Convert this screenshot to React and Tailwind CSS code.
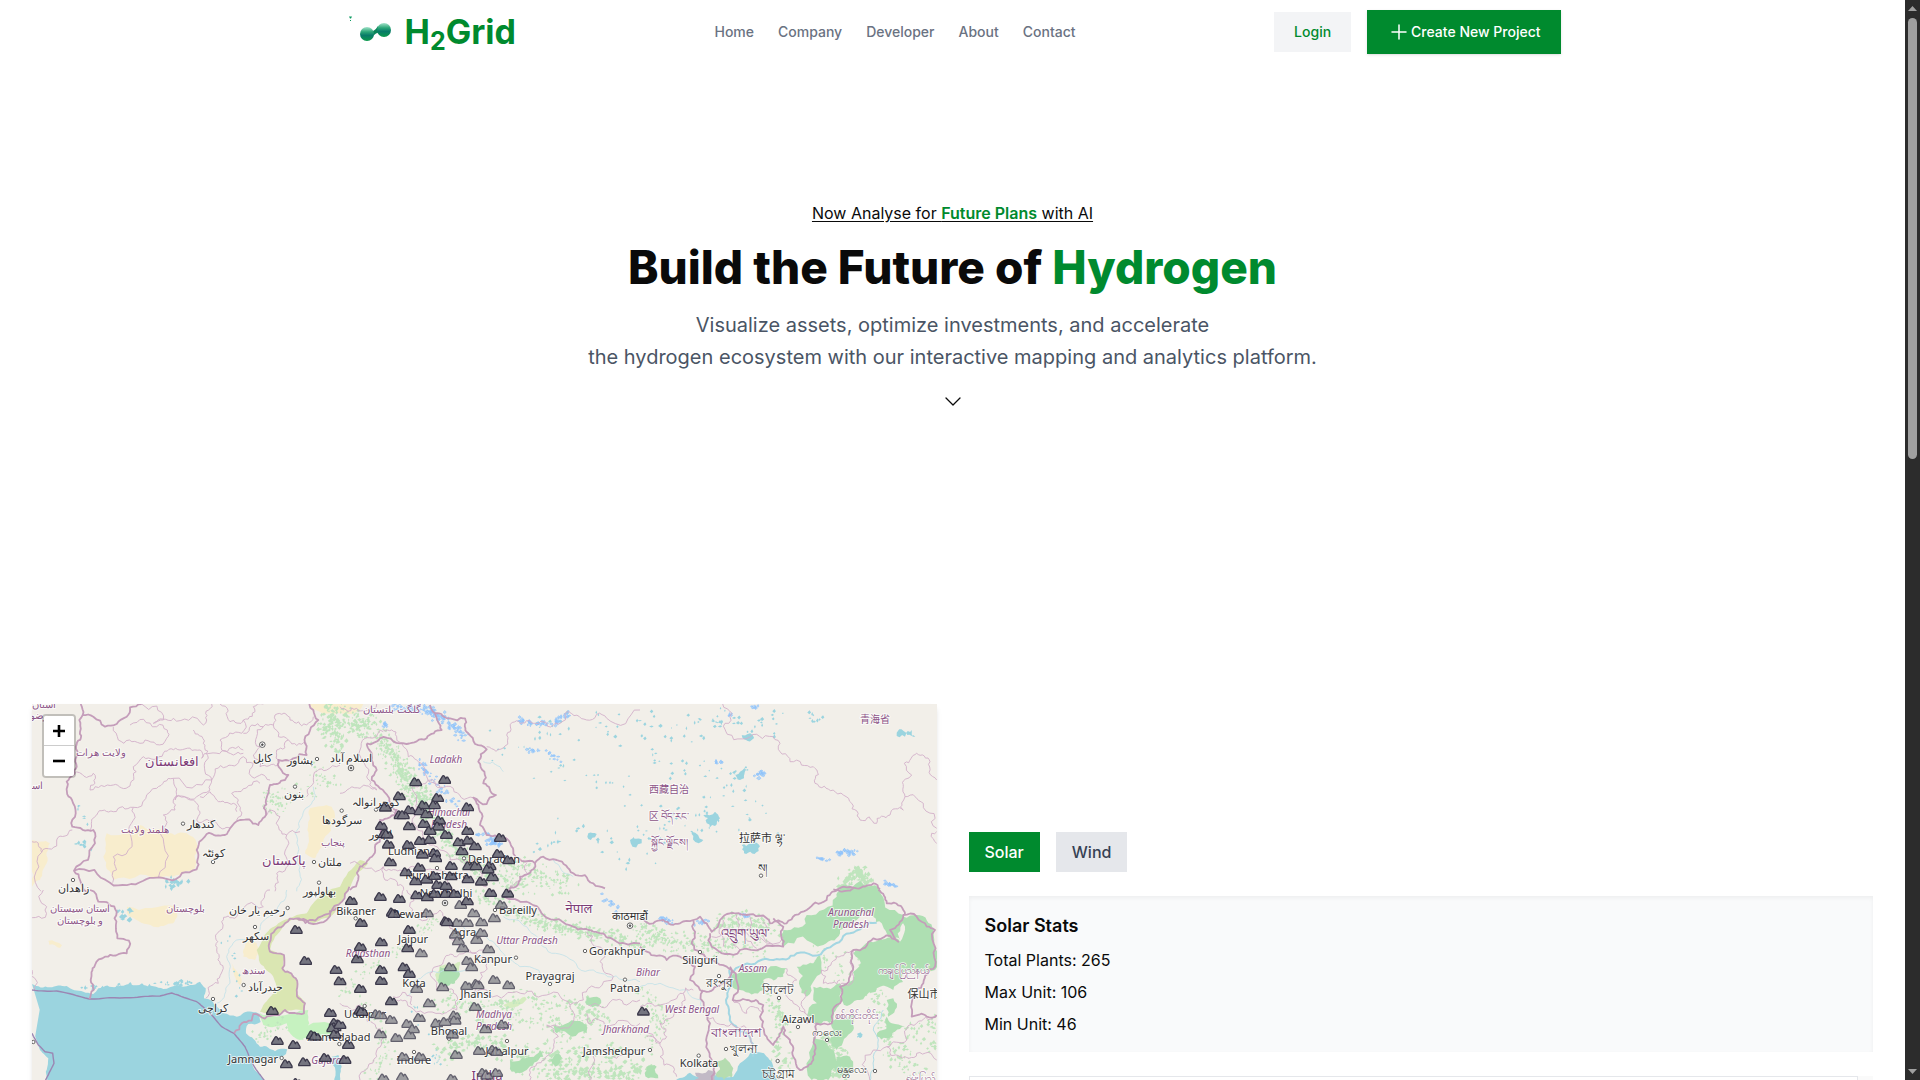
import React, { useMemo, useState } from "react";

/* ---------- map geometry ---------- */

// Origin of each survey sheet; sheet coordinates are three times finer than the map's.
const SHEET = { A: [30, 700], B: [340, 700], C: [640, 700], D: [30, 890], E: [340, 890], F: [640, 890] };

const toPoints = (sheet, text) =>
  text.trim().split(/\s+/).map((p) => {
    const [x, y] = p.split(",").map(Number);
    return [SHEET[sheet][0] + x / 3, SHEET[sheet][1] + y / 3];
  });

const generator = (seed) => {
  let s = seed;
  return () => {
    s = (s * 1664525 + 1013904223) % 4294967296;
    return s / 4294967296;
  };
};

// Midpoint displacement, so that borders and coasts look natural.
const roughen = (points, amount, random) => {
  let current = points;
  for (let pass = 0; pass < 3; pass += 1) {
    const next = [current[0]];
    for (let i = 1; i < current.length; i += 1) {
      const [ax, ay] = current[i - 1];
      const [bx, by] = current[i];
      const length = Math.hypot(bx - ax, by - ay);
      if (length > 4) {
        const shift = (random() - 0.5) * length * amount;
        next.push([(ax + bx) / 2 - ((by - ay) / length) * shift, (ay + by) / 2 + ((bx - ax) / length) * shift]);
      }
      next.push([bx, by]);
    }
    current = next;
  }
  return current;
};

const line = (sheet, text, amount = 0.35, close = false) => {
  const base = toPoints(sheet, text);
  const points = roughen(close ? [...base, base[0]] : base, amount, generator(text.length * 97 + 11));
  return "M" + points.map(([x, y]) => x.toFixed(1) + " " + y.toFixed(1)).join("L") + (close ? "Z" : "");
};

// Small scattered patches along a line of places.
const scatter = (sheet, text, radius, count, size, seed) => {
  const random = generator(seed);
  const places = toPoints(sheet, text);
  let d = "";
  for (let i = 0; i < count; i += 1) {
    const k = Math.floor(random() * Math.max(1, places.length - 1));
    const a = places[k];
    const b = places[Math.min(k + 1, places.length - 1)];
    const t = random();
    const angle = random() * Math.PI * 2;
    const r = radius * random();
    const x = a[0] + (b[0] - a[0]) * t + Math.cos(angle) * r;
    const y = a[1] + (b[1] - a[1]) * t + Math.sin(angle) * r;
    const w = size * (0.3 + random() * 0.8);
    const h = size * (0.3 + random() * 0.7);
    d += `M${x.toFixed(1)} ${y.toFixed(1)}l${w.toFixed(1)} ${(-h).toFixed(1)}l${(w * 0.7).toFixed(1)} ${h.toFixed(1)}l${(-w * 0.8).toFixed(1)} ${(h * 0.8).toFixed(1)}z`;
  }
  return d;
};

const DESERTS = [
  ["A", "230,400 330,375 400,392 470,400 500,430 495,505 380,535 250,540 220,470"],
  ["A", "840,325 905,320 915,350 880,430 855,475 825,460 832,390"],
  ["A", "6,420 60,430 50,490 30,540 6,560"],
  ["D", "290,50 440,50 430,100 370,110 300,80"],
  ["D", "650,150 680,160 675,210 640,200"],
  ["D", "605,220 635,270 630,285 612,255"],
  ["D", "55,152 96,166 90,174 58,164"],
  ["A", "825,0 905,5 1000,12 960,42 900,40"],
  ["D", "6,520 20,540 30,570 6,570"],
];

const GRASS = [
  ["D", "930,-10 870,15 830,70 800,75 745,100 700,140 680,180 690,220 730,260 740,300 700,345 690,365 740,375 790,360 820,362 825,335 800,310 798,265 760,240 762,195 720,180 735,140 790,85 850,100 900,80 940,25 965,-20 1015,-80 990,-90"],
];

const RANN = [["D", "690,370 740,380 835,360 838,400 820,450 790,440 770,400 700,405"], ["D", "770,420 900,400 905,440 810,450"]];

const FORESTS = [
  ["F", "430,120 500,75 590,20 600,-6 700,0 735,40 650,90 600,120 550,165 430,170"],
  ["F", "600,-10 720,-5 790,75 780,150 740,130 700,80 640,60"],
  ["F", "280,250 320,240 440,235 430,260 370,270 370,300 300,300 275,285"],
  ["F", "640,190 720,145 780,155 790,80 830,75 880,120 885,240 800,240 760,300 720,290 660,330 600,330 600,290 640,270"],
  ["F", "520,290 600,280 600,340 570,400 500,380"],
  ["F", "470,230 540,195 545,240 500,320 480,290"],
  ["F", "740,380 755,400 795,410 740,445 710,440"],
  ["F", "570,390 640,370 640,420 590,480 570,450"],
  ["F", "520,440 560,460 565,570 515,570"],
  ["F", "20,530 50,530 55,565 25,565"],
  ["F", "590,500 630,500 620,560 590,550"],
  ["F", "740,330 760,325 765,360 745,380"],
  ["E", "640,405 730,400 740,430 650,430"],
  ["E", "540,510 600,480 610,500 560,540 530,545"],
  ["E", "740,320 780,325 775,350 740,345"],
  ["E", "510,510 560,520 540,550 515,545"],
  ["E", "630,510 655,490 660,520 645,530"],
  ["E", "300,230 350,235 345,280 300,285"],
];

const LIGHT_GRASS = [["E", "490,345 555,320 560,328 500,352"], ["E", "300,225 360,215 350,270 300,285 285,255"]];

const SCATTERED_GREEN = [
  ["A", "880,20 920,60 870,90 930,110 900,140", 10, 130, 2.6, 3],
  ["A", "720,270 730,320 760,290 900,250 830,210", 11, 90, 2, 4],
  ["B", "0,30 30,70 60,90 90,40", 14, 110, 2.4, 5],
  ["B", "110,120 150,150 170,200 200,250 240,300 280,330", 13, 320, 2.2, 6],
  ["B", "170,200 260,330 310,420 380,480 450,530 570,560", 11, 320, 2.3, 7],
  ["B", "490,490 580,520 680,560", 14, 110, 2.2, 8],
  ["E", "400,10 500,60 600,100 700,120 800,140 900,165", 9, 300, 2.4, 9],
  ["F", "0,110 60,150 140,160 250,170 360,170", 12, 230, 2.2, 10],
  ["F", "230,110 300,100 380,120", 14, 130, 2.4, 11],
  ["C", "600,560 640,510 680,545", 8, 100, 3, 12],
  ["E", "0,320 80,240 150,190 230,130 280,90", 9, 90, 1.8, 13],
  ["E", "280,330 400,350 520,340 700,350 760,370", 15, 190, 2.3, 14],
  ["E", "300,480 440,450 560,510 700,480 900,530", 18, 260, 2.9, 15],
  ["E", "80,570 140,500 120,420 60,340", 9, 80, 2, 16],
  ["E", "400,400 600,390 700,420 780,380", 12, 120, 2.3, 17],
  ["E", "600,560 700,540 800,560 890,540", 12, 130, 3, 18],
  ["F", "380,340 430,380 400,470 440,540", 10, 90, 2.6, 19],
  ["F", "550,440 600,500 590,560", 12, 90, 3.4, 20],
  ["F", "700,300 720,400 770,500 830,550", 14, 100, 2.4, 21],
  ["F", "0,300 40,350 60,410 20,460", 14, 80, 2, 22],
  ["F", "540,200 620,240 700,190", 16, 50, 2.4, 23],
  ["F", "790,450 870,400 880,480", 14, 50, 2.4, 24],
  ["D", "670,440 700,430 760,400", 9, 35, 2, 25],
];

const SEA = [
  ["D", "6,282 60,292 110,288 160,305 190,312 205,295 260,290 340,285 400,297 480,285 510,275 527,295 522,325 545,332 580,370 620,380 665,365 690,372 692,396 655,402 648,430 690,470 735,484 772,478 768,492 735,505 700,510 665,520 690,555 706,574 760,900 400,900 6,900"],
  ["D", "905,500 925,495 935,530 928,590 908,590"],
  ["F", "80,620 100,574 150,548 170,560 230,555 280,560 300,520 330,490 372,490 400,530 412,574 420,640 250,680"],
];

const LAND = [["D", "-20,420 6,430 20,470 55,505 50,540 30,574 10,640 -20,640"]];

const MANGROVES = [["F", "230,515 255,503 280,535 275,562 230,560"]];
const CITIES = [["F", "165,548 205,540 228,550 222,580 165,580"]];

const LAKES_TEAL = [
  ["C", "190,345 225,335 240,355 225,378 200,370"],
  ["C", "305,435 355,432 355,445 312,460"],
  ["C", "770,98 790,92 795,110"],
  ["C", "802,105 815,90 826,110"],
  ["B", "870,420 905,418 905,430 872,430"],
  ["B", "745,400 770,402 765,412 742,410"],
  ["C", "275,225 300,215 318,208 312,235 290,232"],
  ["C", "155,395 190,420 185,425 160,408"],
  ["C", "222,65 240,60 245,78"],
  ["C", "305,105 338,105 335,120 312,118"],
];

const SCATTERED_TEAL = [
  ["B", "560,90 700,60 820,90 900,60", 20, 36, 2.4, 31],
  ["B", "430,150 560,180 720,210 890,280", 25, 30, 2, 32],
  ["B", "600,440 720,380 800,430 900,450", 24, 26, 2.6, 33],
  ["C", "20,40 120,90 230,60 330,80 440,60", 16, 44, 2.5, 34],
  ["C", "0,170 120,200 240,270 300,220", 26, 40, 2.2, 35],
  ["C", "30,440 100,340 200,340 400,350", 24, 48, 2.2, 36],
  ["C", "480,20 540,60 430,50", 7, 10, 2.4, 37],
  ["A", "120,290 170,380 140,430 180,450", 4, 16, 2.6, 38],
  ["A", "400,545 460,550 390,560", 5, 20, 3, 39],
  ["D", "260,60 300,66 265,80 290,90", 3, 14, 3.2, 40],
  ["D", "580,130 600,200 625,320", 7, 12, 1.8, 41],
  ["D", "150,296 350,284 490,276", 3, 40, 2.6, 42],
  ["E", "280,520 290,500 210,330", 6, 22, 1.8, 43],
  ["F", "650,430 655,440", 4, 8, 2.4, 44],
];

const SCATTERED_BLUE = [
  ["B", "160,20 260,30 310,60 370,110", 7, 110, 2.1, 51],
  ["B", "230,190 260,220 300,270 340,310", 6, 46, 2, 52],
  ["B", "530,60 580,70 640,70 680,40", 4, 60, 2, 53],
  ["B", "440,420 480,435", 5, 30, 2.2, 54],
  ["B", "620,150 660,190", 3, 12, 1.8, 55],
  ["B", "560,150 590,152", 3, 10, 2, 56],
  ["C", "345,225 370,215", 4, 14, 2.4, 57],
  ["C", "225,185 240,187", 3, 8, 2.2, 58],
  ["C", "585,458 640,455", 4, 26, 2.2, 59],
  ["C", "530,475 570,480", 2, 12, 1.8, 67],
  ["C", "725,545 765,562", 2, 16, 2, 60],
  ["F", "50,85 90,95", 3, 14, 2.2, 61],
  ["F", "155,105 200,90", 3, 10, 2.2, 68],
  ["F", "290,72 320,80", 2, 8, 2.2, 69],
  ["E", "780,20 830,50", 7, 10, 2.4, 62],
  ["C", "330,25 345,20", 2, 8, 2, 63],
  ["C", "260,50 270,42", 2, 5, 2, 70],
  ["B", "130,70 135,80", 3, 9, 2, 64],
  ["B", "400,405 440,402", 2, 8, 2, 65],
];

const NATIONAL = [
  ["A", "152,12 158,45 190,50 225,80 260,72 290,50 300,22 335,12"],
  ["A", "158,45 148,60 150,95 138,140 140,200 133,222 110,245 126,300 127,380 190,390 195,430 132,512 240,548 340,542 380,533 415,538 500,508 500,450 515,420 530,402 585,405 600,385 630,360 658,358 685,375 705,350 708,300 720,255 765,240 775,225 750,205 745,180 790,175 830,165 825,130 865,60 850,30 838,12"],
  ["A", "132,512 150,540 170,575"],
  ["D", "180,0 205,35 260,65 262,145 297,152 290,190 225,200 195,225 182,270 178,327"],
  ["B", "80,130 120,115 200,132 260,115 305,90 285,40 330,55 375,55 385,100 440,148 415,185 430,250 468,285 440,312 400,293 425,340 420,375 440,405 490,415 520,450 585,490 610,470 650,480 700,520 760,550 795,565"],
  ["B", "80,130 95,180 110,210 95,240 145,290 170,330 120,360 125,410 100,465 60,500 30,570"],
  ["B", "270,15 285,40"],
  ["E", "28,-10 -30,70 -75,92 -130,85"],
  ["D", "800,85 850,102 890,90 925,50"],
  ["D", "800,85 765,100 722,150 720,185 762,195 757,235 797,265 800,300 825,340 822,370 765,360 740,375 670,372 665,392 635,400 612,430"],
  ["E", "490,20 560,35 610,75 700,110 760,125 790,130 830,155 900,160"],
  ["E", "585,-80 540,-40 500,5"],
  ["F", "0,85 40,100 70,90 120,100 160,90 180,80 200,100 215,125 240,90 270,70 320,75 390,100 440,100 500,60 560,30 595,0 640,-5"],
  ["F", "160,90 155,160 180,190 260,230 275,240 260,280 230,290 180,300 150,270 165,230 120,200 80,210 20,185 0,170"],
  ["F", "210,130 215,170 300,180 430,170 430,110 400,85"],
  ["F", "190,300 210,400 200,440 215,520 215,574"],
  ["F", "270,230 278,330 320,330 370,345 360,380 380,440 400,465 430,410 450,450 460,500 480,540 520,510 525,440 530,400 575,400 605,330 600,290 640,230 640,180 700,145 775,155 750,120 790,75 830,80 860,110 885,120 885,230 850,280 830,300 815,340 815,380 860,380 890,375"],
  ["C", "580,568 610,560 650,565 700,550 720,568"],
  ["F", "715,0 740,40 790,60 795,75"],
];

const MARITIME = [
  ["D", "6,300 80,303 178,327 300,323 390,318 425,309 500,335 540,370 575,410 612,430 645,470 670,525 705,574"],
  ["D", "6,430 25,465 45,485 68,490 72,520 45,574"],
];

const PROVINCIAL = [
  ["A", "250,80 265,120 330,130 345,120 410,115 412,90 380,80 300,75"],
  ["A", "133,222 190,220 195,250 180,270 250,255 300,258 310,200 340,170 400,160 450,150 510,150 515,175 540,160 610,165 640,160"],
  ["A", "335,12 400,60 370,70 430,55 520,75 530,60 545,12"],
  ["A", "490,90 520,130 530,180 545,240"],
  ["A", "570,12 600,65 640,60 635,100 570,120 575,150 640,150"],
  ["A", "640,60 670,20 700,12"],
  ["A", "640,100 700,80 730,75 735,45 780,60 830,75 850,50"],
  ["A", "700,80 680,110 690,140 670,165 690,200 745,195"],
  ["A", "730,75 745,110 775,120 830,130"],
  ["A", "775,120 740,150 745,180"],
  ["A", "545,240 590,200 640,170 670,190 665,230 720,240"],
  ["A", "620,360 625,300 605,280 670,245 690,250"],
  ["A", "545,240 540,270 500,290 430,300 435,330 400,345 390,400 385,533"],
  ["A", "180,390 200,345 250,335 310,322 380,265 430,235 545,240"],
  ["A", "310,322 300,400 250,470 248,548"],
  ["A", "430,235 435,300 490,300 510,340 500,360 560,370 600,385"],
  ["A", "510,290 540,275 560,300 610,310 620,335"],
  ["A", "705,350 735,335 750,350 748,390 770,405 810,395"],
  ["A", "770,405 768,470 740,520 735,574"],
  ["A", "6,425 35,457 80,420 127,390"],
  ["A", "35,457 33,574"],
  ["D", "0,90 35,85 50,50 35,40 40,0"],
  ["D", "720,0 700,50 620,80 575,95 562,130 560,180 580,235 565,280 527,325"],
  ["D", "6,240 18,270 15,300"],
  ["A", "830,290 850,240 890,210 930,195"],
  ["B", "0,20 50,25 110,12"],
  ["B", "0,280 60,265 110,270 80,230 60,150 75,115 120,90 130,95"],
  ["B", "185,130 205,170 230,180 260,230 300,262 340,265 400,293"],
  ["B", "130,90 170,110 200,132"],
  ["B", "440,140 495,138 500,105 530,62 580,70 640,75 680,35 740,60 800,55 900,30"],
  ["B", "220,330 230,290 215,262 260,245 300,262"],
  ["B", "140,330 200,345 220,330 225,375 260,420 300,450 330,480 370,490"],
  ["B", "130,500 180,510 240,500 290,510 340,570"],
  ["B", "30,490 130,500 135,540 190,560 185,590"],
  ["B", "370,480 420,500 440,560"],
  ["B", "560,490 540,540 510,570"],
  ["C", "248,12 275,40 255,70 262,103 350,103 420,130 450,185 520,200 525,250 580,270 635,310 660,360 710,370 750,345 790,330 795,290 850,310 890,385"],
  ["C", "795,290 790,260 815,225 793,190 830,160 870,185 890,240"],
  ["C", "890,395 875,400 890,430"],
  ["E", "200,0 215,70 300,60 330,100 335,150 400,190 430,200"],
  ["E", "430,200 420,270 400,310 440,300 530,305 620,315 690,345 730,330 745,295 820,260 780,215 790,180 740,125"],
  ["E", "270,250 310,215 350,200 430,180"],
  ["E", "270,250 290,300 340,300 350,360 300,370 210,350 170,330"],
  ["E", "0,340 60,345 100,400 130,440 110,500 60,570"],
  ["E", "160,320 215,320 215,345"],
  ["E", "690,345 700,395 620,405 655,440 630,490 590,520 570,570"],
  ["E", "745,345 800,350 860,345 900,330"],
  ["E", "740,370 745,400 800,410 900,400"],
  ["E", "750,574 760,500 830,505 900,480"],
  ["F", "0,350 60,345 120,310 160,300"],
  ["F", "130,310 125,350 100,380 60,400 80,440 60,460 20,440"],
  ["F", "278,330 320,370 340,350 365,365"],
  ["F", "275,400 330,440 350,480"],
  ["F", "200,380 230,400 275,400"],
  ["F", "440,235 470,270 430,300 450,330 460,340"],
  ["F", "545,240 550,280 600,270"],
  ["F", "545,240 590,200 640,185 640,270 600,285"],
  ["F", "460,340 495,370 500,400 530,400"],
  ["F", "500,300 495,370"],
  ["F", "250,90 250,170"],
  ["F", "290,75 280,130 300,180"],
  ["F", "330,80 320,120 350,175"],
  ["F", "370,95 375,130 400,165"],
  ["F", "215,140 300,130 430,140"],
  ["F", "740,470 800,450 830,400 890,380"],
  ["F", "690,574 700,480 740,470 780,500 830,490 890,510"],
  ["F", "0,410 40,440 60,500 100,530 110,560"],
];

const RIVERS = [
  ["A", "850,260 845,310 810,360 805,440 810,500 800,574"],
  ["D", "770,0 740,60 690,120 620,150 590,200 600,280 560,340"],
  ["E", "490,80 560,110 600,160 680,200 760,240 850,270 900,275"],
  ["E", "370,110 430,130 480,180 540,230 640,280"],
  ["F", "0,290 60,280 140,300 200,380"],
  ["E", "200,320 260,250 400,220"],
  ["B", "640,480 700,530"],
  ["B", "430,185 480,200 490,215"],
];

const BIG_RIVERS = [
  ["F", "270,250 310,225 400,210 470,190 560,175 630,130 710,98"],
  ["F", "268,240 265,300 270,380 275,400 320,430 340,500"],
];

const SMALL_RIVERS = [["F", "730,360 700,420 700,500 690,574"]];

const TINTS = { town: "#333333", region: "#8d5487", country: "#7d3c77" };

// [text, x, baseline, size, kind, italic]
const LABELS = [
  ["افغانستان", 172, 766, 13, "country"],
  ["ولایت هرات", 101, 756, 10, "region"],
  ["هلمند ولایت", 145, 833, 10, "region"],
  ["کندهار", 201, 828, 11, "town"],
  ["كابل", 262, 762, 11, "town"],
  ["پشاور", 300, 764, 11, "town"],
  ["بنون", 294, 798, 11, "town"],
  ["کوئٹہ", 213, 857, 11, "town"],
  ["پاکستان", 284, 865, 13, "country"],
  ["ملتان", 330, 866, 11, "town"],
  ["زاهدان", 73, 892, 11, "town"],
  ["استان", 44, 708, 10, "region"],
  ["رضوی", 35, 719, 10, "region"],
  ["اسـ", 36, 789, 10, "region"],
  ["بهاولپور", 319, 895, 11, "town"],
  ["گلگت بلتستان", 392, 713, 10, "region"],
  ["اسلام آباد", 351, 762, 11, "town"],
  ["گوجرانوالہ", 376, 806, 11, "town"],
  ["سرگودها", 342, 824, 11, "town"],
  ["پنجاب", 333, 846, 10, "region"],
  ["لاہور", 380, 838, 11, "town"],
  ["Ladakh", 446, 763, 10, "region", true],
  ["Himachal", 449, 816, 10, "region", true],
  ["Pradesh", 449, 828, 10, "region", true],
  ["Ludhiana", 412, 855, 11, "town"],
  ["Dehradun", 494, 863, 11, "town"],
  ["Kurukshetra", 437, 879, 11, "town"],
  ["New Delhi", 446, 897, 11, "town"],
  ["西藏自治", 669, 793, 10, "region"],
  ["区 བོད་རང་", 669, 820, 10, "region"],
  ["སྐྱོང་ལྗོངས།", 669, 846, 10, "region"],
  ["拉萨市 ལྷ་", 762, 842, 11, "town"],
  ["ས།", 762, 872, 11, "town"],
  ["青海省", 875, 723, 10, "region"],
  ["استان سيستان", 80, 912, 10, "region"],
  ["و بلوچستان", 80, 924, 10, "region"],
  ["بلوچستان", 185, 912, 10, "region"],
  ["رحیم یار خان", 257, 914, 11, "town"],
  ["سکهر", 256, 940, 11, "town"],
  ["سندھ", 253, 974, 10, "region"],
  ["حيدرآباد", 265, 991, 11, "town"],
  ["کراچی", 213, 1012, 11, "town"],
  ["Jamnagar", 253, 1063, 11, "town"],
  ["Gujarat", 328, 1064, 10, "region", true],
  ["Ahmedabad", 339, 1041, 11, "town"],
  ["Bikaner", 356, 915, 11, "town"],
  ["Rewari", 410, 918, 11, "town"],
  ["Jaipur", 413, 943, 11, "town"],
  ["Agra", 464, 936, 11, "town"],
  ["Bareilly", 518, 914, 11, "town"],
  ["Uttar Pradesh", 527, 944, 10, "region", true],
  ["Kanpur", 493, 963, 11, "town"],
  ["Rajasthan", 368, 957, 10, "region", true],
  ["Kota", 414, 987, 11, "town"],
  ["Jhansi", 476, 998, 11, "town"],
  ["Prayagraj", 550, 980, 11, "town"],
  ["Gorakhpur", 617, 955, 11, "town"],
  ["Patna", 625, 992, 11, "town"],
  ["Bihar", 648, 976, 10, "region", true],
  ["नेपाल", 579, 913, 13, "country"],
  ["काठमाडौं", 630, 920, 11, "town"],
  ["Udaipur", 365, 1018, 11, "town"],
  ["Bhopal", 449, 1035, 11, "town"],
  ["Madhya", 494, 1018, 10, "region", true],
  ["Pradesh", 494, 1030, 10, "region", true],
  ["Indore", 414, 1064, 11, "town"],
  ["Jabalpur", 507, 1055, 11, "town"],
  ["Jharkhand", 626, 1033, 10, "region", true],
  ["Jamshedpur", 614, 1055, 11, "town"],
  ["India", 487, 1080, 13, "country"],
  ["འབྲུག་ཡུལ་", 745, 938, 13, "country"],
  ["Siliguri", 700, 964, 11, "town"],
  ["Assam", 753, 972, 10, "region", true],
  ["রংপুর", 719, 987, 12, "town"],
  ["সিলেট", 778, 994, 12, "town"],
  ["Aizawl", 798, 1023, 11, "town"],
  ["West Bengal", 692, 1013, 10, "region", true],
  ["বাংলাদেশ", 736, 1037, 13, "country"],
  ["খুলনা", 743, 1053, 12, "town"],
  ["Kolkata", 699, 1067, 11, "town"],
  ["চট্টগ্রাম", 778, 1078, 12, "town"],
  ["ကလေး", 827, 1036, 11, "town"],
  ["မန္တလေး", 852, 1073, 11, "town"],
  ["စစ်ကိုင်းတိုင်း", 857, 1019, 10, "region"],
  ["ကချင်ပြည်နယ်", 903, 974, 10, "region"],
  ["保山市", 924, 998, 11, "town"],
  ["ရှမ်းပြည်", 920, 1082, 10, "region"],
  ["Arunachal", 851, 916, 10, "region", true],
  ["Pradesh", 851, 928, 10, "region", true],
];

const TOWN_DOTS = [
  ["A", "459,371 861,177 795,260 549,486 852,486 129,540 867,548"],
  ["B", "108,329 5,332 372,475 291,504"],
  ["C", "363,527"],
  ["D", "773,54 675,111 641,285 549,327 755,504 928,462 10,456"],
  ["E", "47,85 465,60 528,203 630,282 735,183 855,269 74,348 327,446 222,486 501,453"],
  ["F", "30,480 180,186 237,258 417,324 474,411 258,477 176,497 413,513 561,450 705,543"],
];

const CAPITAL_DOTS = [["A", "697,134"], ["B", "33,204"], ["E", "315,39 870,107"]];

const SOLAR = [
  ["B", "227,245 314,238 178,287 136,321 293,292 283,314 250,314 209,329 240,332 180,344 190,344 260,341 383,320 124,376 208,377 252,370 298,360 295,378 270,391 319,403 383,391 481,412 133,401 141,402 145,432 205,433 241,421 270,418 357,425 385,420 406,437 366,452 247,462 284,457 287,473 475,460 506,479 151,485 238,501 198,515 334,496 386,497 408,497 450,497 444,507 457,530 227,542 260,537 284,526 333,527 384,536 424,543 293,553 318,556"],
  ["D", "799,118 827,211 918,238 930,272 727,361 901,367 915,397 915,410 908,413 915,432 847,434 856,438 742,451 793,463 769,521 823,515 886,502 800,577"],
  ["E", "34,31 121,19 178,25 230,14 262,20 157,66 162,70 64,97 208,118 124,155 61,169 203,173 52,206 124,238 192,230 208,250 124,271 61,295 154,332 60,360 66,364 25,463 15,508 0,403 318,92 322,95 452,7 503,9 382,32 285,10 318,10 345,10"],
  ["F", "10,363"],
];

const SOLAR_FAINT = [
  ["E", "362,43 484,43 262,68 401,68 463,83 353,97 382,97 425,95 425,127 346,132 355,152 410,148 368,173 446,176 244,188 383,211 395,230 331,230 463,268 506,284 380,286 410,280 414,284 308,290 230,295 268,338 406,349 110,371 122,374 154,388 238,382 344,375 345,390 203,400 220,416 290,398 315,394 121,431 170,442 209,434 337,432 437,416 488,402 349,493 418,481 460,478 470,484 190,499 241,499 430,547 470,547 440,555 130,564 187,560 336,565"],
];

const Shapes = ({ items, fill, amount = 0.3 }) => (
  <path d={items.map(([s, t]) => line(s, t, amount, true)).join("")} fill={fill} />
);

const Strokes = ({ items, color, width, amount = 0.35 }) => (
  <path d={items.map(([s, t]) => line(s, t, amount)).join("")} fill="none" stroke={color} strokeWidth={width} strokeLinejoin="round" />
);

const Scattered = ({ items, fill, stroke }) => (
  <path d={items.map((args) => scatter(...args)).join("")} fill={fill} stroke={stroke} strokeWidth={stroke ? 0.6 : 0} />
);

const Markers = ({ items, fill, stroke, opacity }) => (
  <g fill={fill} stroke={stroke} strokeWidth="1.3" strokeLinejoin="round" opacity={opacity}>
    {items.flatMap(([s, t]) =>
      toPoints(s, t).map(([x, y], i) => (
        <path key={s + i} transform={`translate(${x} ${y})`} d="M-5.6 4V2.6L-2.3-3Q-1.4-4.6-.2-3L1-.6 2-2.2 3-2.2 5.7 2.4V4Z" />
      ))
    )}
  </g>
);

function IndiaMap() {
  return (
    <svg viewBox="32 704 905 596" preserveAspectRatio="xMinYMin slice" className="h-full w-full" role="img" aria-label="Map of solar plants in India">
      <rect x="32" y="704" width="905" height="596" fill="#f2efe9" />
      <Shapes items={DESERTS} fill="#f8edcd" />
      <Shapes items={RANN} fill="#c6f2c0" />
      <Shapes items={GRASS} fill="#dae6b2" amount={0.15} />
      <Shapes items={LIGHT_GRASS} fill="#d5ecc0" />
      <Scattered items={SCATTERED_GREEN} fill="#bfe5bd" />
      <Shapes items={FORESTS} fill="#aedfb2" amount={0.5} />
      <Shapes items={SEA} fill="#9bd4df" amount={0.25} />
      <Shapes items={LAND} fill="#f2efe9" amount={0.1} />
      <Shapes items={MANGROVES} fill="#b5dcb0" amount={0.5} />
      <Shapes items={CITIES} fill="#c2bac6" amount={0.8} />
      <Shapes items={LAKES_TEAL} fill="#9bd4df" amount={0.8} />
      <Scattered items={SCATTERED_TEAL} fill="#9bd4df" />
      <Scattered items={SCATTERED_BLUE} fill="#b5d6f3" stroke="#8fc2fb" />
      <Strokes items={RIVERS} color="#c0e1e8" width={0.8} />
      <Strokes items={SMALL_RIVERS} color="#b4dde6" width={1} />
      <Strokes items={BIG_RIVERS} color="#a3d6e2" width={2} />
      <Strokes items={PROVINCIAL} color="#d3b0ca" width={0.9} amount={0.6} />
      <Strokes items={MARITIME} color="#9b86b3" width={1.4} amount={0.04} />
      <Strokes items={NATIONAL} color="#c49dba" width={1.8} amount={0.4} />
      <g fill="#ffffff" stroke="#555555" strokeWidth="0.9">
        {TOWN_DOTS.flatMap(([s, t]) => toPoints(s, t).map(([x, y], i) => <circle key={s + i} cx={x} cy={y} r="1.7" />))}
        {CAPITAL_DOTS.flatMap(([s, t]) =>
          toPoints(s, t).map(([x, y], i) => (
            <g key={s + i}>
              <circle cx={x} cy={y} r="2.8" />
              <circle cx={x} cy={y} r="0.9" fill="#555555" />
            </g>
          ))
        )}
      </g>
      <g textAnchor="middle" stroke="#ffffff" strokeOpacity="0.7" strokeWidth="2" strokeLinejoin="round" fontFamily="'Noto Sans', 'Noto Sans CJK SC', sans-serif" style={{ paintOrder: "stroke" }}>
        {LABELS.map(([text, x, y, size, kind, italic], i) => (
          <text key={i} x={x} y={y} fontSize={size} fill={TINTS[kind]} fontStyle={italic ? "italic" : "normal"}>
            {text}
          </text>
        ))}
      </g>
      <Markers items={SOLAR_FAINT} fill="#8f8f94" stroke="#4a4858" opacity={0.85} />
      <Markers items={SOLAR} fill="#6a6a76" stroke="#2b283c" opacity={0.92} />
    </svg>
  );
}

/* ---------- page ---------- */

function Logo() {
  return (
    <a href="#home" className="flex items-center gap-3 text-[#008a2e]">
      <svg viewBox="0 0 48 40" className="h-10 w-12" aria-hidden="true">
        <defs>
          <linearGradient id="ball" x1="0" y1="0" x2="0" y2="1">
            <stop offset="0" stopColor="#a5e3cb" />
            <stop offset="0.35" stopColor="#2aa677" />
            <stop offset="0.6" stopColor="#087a68" />
            <stop offset="1" stopColor="#0b9a4b" />
          </linearGradient>
        </defs>
        <path d="M22 20Q29 21 33 14L36 20Q31 20 26 26Z" fill="#0a8558" />
        <circle cx="22" cy="22" r="7" fill="url(#ball)" />
        <circle cx="39" cy="18" r="7" fill="url(#ball)" />
        <path d="M4 4.500h3l-1 2H5zM5 8h1v1H5z" fill="#0a9a60" />
      </svg>
      <span className="text-[34px] leading-10 font-bold">
        H<sub className="text-[25px]">2</sub>Grid
      </span>
    </a>
  );
}

function Header() {
  return (
    <header className="mx-auto flex h-16 w-full max-w-7xl items-center justify-between px-8">
      <Logo />
      <nav className="flex gap-6 text-sm font-medium text-[#6a7282]">
        <a href="#home">Home</a>
        <a href="#company">Company</a>
        <a href="#developer">Developer</a>
        <a href="#about">About</a>
        <a href="#contact">Contact</a>
      </nav>
      <div className="flex items-center gap-4 text-sm font-medium">
        <button type="button" className="h-10 bg-gray-100 px-5 text-[#008a2e]">Login</button>
        <button type="button" className="flex h-11 items-center bg-[#008a2e] px-5 text-white shadow-sm">
          <svg viewBox="0 0 24 24" className="h-6 w-6" fill="none" stroke="currentColor" strokeWidth="1.5" strokeLinecap="round" aria-hidden="true">
            <path d="M12 5v14M5 12h14" />
          </svg>
          Create New Project
        </button>
      </div>
    </header>
  );
}

function Hero() {
  return (
    <section className="flex h-[640px] flex-col items-center pt-[137px] text-center">
      <p className="leading-6 underline underline-offset-2">
        Now Analyse for <span className="font-semibold text-[#008a2e]">Future Plans</span> with AI
      </p>
      <h1 className="mt-3.5 text-[46px] leading-[56px] font-extrabold">
        Build the Future of <span className="text-[#008a2e]">Hydrogen</span>
      </h1>
      <p className="mt-3.5 text-xl leading-8 text-[#4a5565]">
        Visualize assets, optimize investments, and accelerate
        <br />
        the hydrogen ecosystem with our interactive mapping and analytics platform.
      </p>
      <button type="button" aria-label="Scroll down" className="mt-4">
        <svg viewBox="0 0 24 24" className="h-6 w-6" fill="none" stroke="currentColor" strokeWidth="1.3" strokeLinecap="round" strokeLinejoin="round" aria-hidden="true">
          <path d="M5 9l7 7L19 9" />
        </svg>
      </button>
    </section>
  );
}

const STATS = {
  Solar: [["Total Plants", 265], ["Max Unit", 106], ["Min Unit", 46]],
  Wind: [["Total Plants", 265], ["Max Unit", 106], ["Min Unit", 46]],
};

function Explorer() {
  const [source, setSource] = useState("Solar");
  const map = useMemo(() => <IndiaMap />, []);
  return (
    <section className="grid grid-cols-2 gap-8 px-8">
      <div className="relative h-[596px] overflow-hidden shadow-md">
        {map}
        <div className="absolute top-[10px] left-[10px] flex flex-col rounded border-2 border-black/20 bg-clip-padding text-black">
          <button type="button" aria-label="Zoom in" className="flex h-[30px] w-[30px] items-center justify-center rounded-t-xs border-b border-[#cccccc] bg-white">
            <svg viewBox="0 0 12 12" className="h-3 w-3" stroke="currentColor" strokeWidth="2.6" aria-hidden="true"><path d="M6 0v12M0 6h12" /></svg>
          </button>
          <button type="button" aria-label="Zoom out" className="flex h-[30px] w-[30px] items-center justify-center rounded-b-xs bg-white">
            <svg viewBox="0 0 12 12" className="h-3 w-3" stroke="currentColor" strokeWidth="2.6" aria-hidden="true"><path d="M0 6h12" /></svg>
          </button>
        </div>
      </div>
      <div className="flex flex-col gap-6 pt-32">
        <div className="flex gap-4 font-medium">
          {["Solar", "Wind"].map((name) => (
            <button
              key={name}
              type="button"
              onClick={() => setSource(name)}
              className={name === source ? "h-10 bg-[#008a2e] px-4 text-white" : "h-10 bg-gray-200 px-4 text-gray-700"}
            >
              {name}
            </button>
          ))}
        </div>
        <div className="flex flex-col gap-2 bg-gray-50 p-4 inset-shadow-sm">
          <h2 className="text-lg leading-7 font-semibold">{source} Stats</h2>
          {STATS[source].map(([name, value]) => (
            <p key={name} className="leading-6">{name}: {value}</p>
          ))}
        </div>
        <div className="flex h-64 bg-[#fafafa]">
          <div className="flex-1 border border-gray-200 bg-white" />
          <div className="w-[15px]" />
        </div>
      </div>
    </section>
  );
}

function PageScrollbar() {
  return (
    <div className="flex w-[15px] shrink-0 flex-col items-center justify-between bg-[#2c2c2c] py-[6px]" aria-hidden="true">
      <div className="flex min-h-0 flex-1 flex-col items-center gap-[7px]">
        <svg viewBox="0 0 9 5" className="h-[5px] w-[9px] shrink-0" fill="#a0a0a0"><path d="M4.500 0L9 5H0Z" /></svg>
        <div className="h-[41.5%] w-[9px] rounded-full bg-[#a0a0a0]" />
      </div>
      <svg viewBox="0 0 9 5" className="h-[5px] w-[9px] shrink-0" fill="#a0a0a0"><path d="M4.500 5L9 0H0Z" /></svg>
    </div>
  );
}

export default function App() {
  return (
    <div className="flex h-screen overflow-hidden bg-white font-['Inter','Noto_Sans',sans-serif] text-[#0a0a0a]">
      <main className="min-w-0 flex-1 overflow-hidden">
        <Header />
        <Hero />
        <Explorer />
      </main>
      <PageScrollbar />
    </div>
  );
}
